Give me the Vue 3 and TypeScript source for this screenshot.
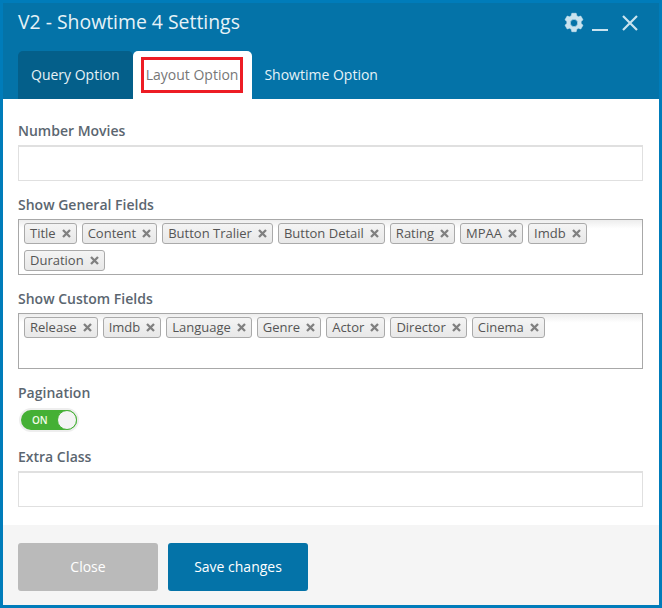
<script setup lang="ts">
const general: string[] = ['Title', 'Content', 'Button Tralier', 'Button Detail', 'Rating', 'MPAA', 'Imdb', 'Duration']
const custom: string[] = ['Release', 'Imdb', 'Language', 'Genre', 'Actor', 'Director', 'Cinema']
</script>

<template>
  <div class="frame">
    <header class="head">
      <div class="title-row">
        <h1 class="title">V2 - Showtime 4 Settings</h1>
        <div class="controls">
          <svg class="gear" width="22" height="22" viewBox="0 0 22 22" aria-hidden="true">
            <path fill-rule="evenodd" fill="#c9e3ef" stroke="#c9e3ef" stroke-width="0.6" stroke-linejoin="round" d="M8.800 1.300h4.400l.5 2.500a7.600 7.600 0 0 1 1.700 1l2.400-.8 2.200 3.800-1.900 1.700a7.600 7.600 0 0 1 0 2l1.900 1.700-2.200 3.800-2.400-.8a7.600 7.600 0 0 1-1.700 1l-.5 2.500H8.800l-.5-2.500a7.600 7.600 0 0 1-1.700-1l-2.400.8-2.200-3.800 1.900-1.700a7.600 7.600 0 0 1 0-2L2 7.800l2.200-3.800 2.400.8a7.600 7.600 0 0 1 1.700-1zM11 7.300a3.700 3.700 0 1 0 0 7.400 3.700 3.700 0 0 0 0-7.400z" />
          </svg>
          <span class="minimize"></span>
          <svg width="16" height="16" viewBox="0 0 16 16" aria-hidden="true">
            <path d="M1 1l14 14M15 1L1 15" stroke="#c9e3ef" stroke-width="2.2" fill="none" />
          </svg>
        </div>
      </div>
      <nav class="tabs">
        <a class="tab tab-dark">Query Option</a>
        <a class="tab tab-active">Layout Option<span class="mark"></span></a>
        <a class="tab tab-plain">Showtime Option</a>
      </nav>
    </header>

    <main class="body">
      <label class="label">Number Movies</label>
      <div class="input"></div>

      <label class="label">Show General Fields</label>
      <div class="tagbox">
        <span v-for="t in general" :key="t" class="tag">{{ t }}<svg class="x" width="9" height="9" viewBox="0 0 9 9" aria-hidden="true"><path d="M1 1l7 7M8 1L1 8" stroke="#808080" stroke-width="2.300" fill="none" /></svg></span>
      </div>

      <label class="label">Show Custom Fields</label>
      <div class="tagbox">
        <span v-for="t in custom" :key="t" class="tag">{{ t }}<svg class="x" width="9" height="9" viewBox="0 0 9 9" aria-hidden="true"><path d="M1 1l7 7M8 1L1 8" stroke="#808080" stroke-width="2.300" fill="none" /></svg></span>
      </div>

      <label class="label">Pagination</label>
      <div class="switch-wrap">
        <div class="switch"><span class="on">ON</span><span class="knob"></span></div>
      </div>

      <label class="label">Extra Class</label>
      <div class="input"></div>
    </main>

    <footer class="foot">
      <button class="btn btn-close">Close</button>
      <button class="btn btn-save">Save changes</button>
    </footer>
  </div>
</template>

<style>
html, body { margin: 0; background: #fff; }
</style>

<style scoped>
.frame {
  width: 662px;
  height: 608px;
  box-sizing: border-box;
  border: 3px solid #007cba;
  display: flex;
  flex-direction: column;
  font-family: "Open Sans", sans-serif;
  font-size: 14px;
  color: #555d66;
}
.head {
  height: 96px;
  background: #0473a8;
  display: flex;
  flex-direction: column;
  justify-content: space-between;
}
.title-row {
  display: flex;
  justify-content: space-between;
  align-items: center;
  height: 40px;
  padding: 0 21px 0 15px;
}
.title {
  margin: -2px 0 0;
  font-size: 19.4px;
  font-weight: 400;
  line-height: 40px;
  color: #e6f2f7;
}
.controls { display: flex; align-items: center; }
.gear { margin-right: 7px; }
.minimize {
  width: 16px;
  height: 2px;
  background: #c9e3ef;
  margin: 13px 14px 0 0;
}
.tabs {
  display: flex;
  padding-left: 15px;
  height: 48px;
}
.tab {
  position: relative;
  display: flex;
  align-items: center;
  padding: 0 13px 2px;
  font-weight: 500;
  color: #e6f2f7;
  border-radius: 5px 5px 0 0;
}
.tab-dark { background: #045f8a; }
.tab-active {
  background: #fff;
  color: #777;
  font-weight: 400;
  padding-right: 14px;
}
.tab-plain { padding-left: 12px; }
.mark {
  position: absolute;
  left: 8px;
  right: 9px;
  top: 6px;
  bottom: 6px;
  border: 3px solid #ed1c24;
}
.body {
  flex: 1;
  padding: 22px 16px 0 15px;
  background: #fff;
}
.label {
  display: block;
  font-weight: 600;
  line-height: 20px;
  margin-bottom: 4px;
  color: #5b6670;
}
.input {
  height: 36px;
  box-sizing: border-box;
  border: 1px solid #e0e0e0;
  border-top-width: 2px;
  margin-bottom: 14px;
}
.tagbox {
  height: 56px;
  box-sizing: border-box;
  border: 1px solid #a8a8a8;
  background: linear-gradient(#eeeeee 1%, #ffffff 16%);
  padding: 3px 5px;
  margin-bottom: 14px;
  display: flex;
  flex-wrap: wrap;
  align-content: flex-start;
  gap: 6px 5px;
}
.tag {
  display: inline-flex;
  align-items: center;
  height: 21px;
  box-sizing: border-box;
  padding: 0 5px 2px;
  border: 1px solid #aaa;
  border-radius: 3px;
  background: linear-gradient(#f4f4f4, #e8e8e8);
  font-size: 13px;
  color: #555;
}
.x {
  margin: 2px 0 0 6px;
}
.switch-wrap { margin-bottom: 14px; height: 26px; display: flex; align-items: center; }
.switch {
  position: relative;
  width: 56px;
  height: 20px;
  border-radius: 10px;
  background: #45b035;
  box-shadow: 0 0 0 2px #eee;
  margin-left: 3px;
  display: flex;
  align-items: center;
}
.on {
  font-size: 10px;
  font-weight: 600;
  color: #f2fbe8;
  margin-left: 11px;
}
.knob {
  position: absolute;
  right: 0;
  top: 0;
  width: 20px;
  height: 20px;
  box-sizing: border-box;
  border-radius: 50%;
  background: #f4f4f4;
  border: 1px solid #45b035;
}
.foot {
  height: 80px;
  box-sizing: border-box;
  background: #f5f5f5;
  padding: 18px 15px;
  display: flex;
  gap: 10px;
}
.btn {
  width: 140px;
  height: 48px;
  border: 0;
  border-radius: 3px;
  font-family: inherit;
  font-size: 14px;
  font-weight: 500;
  color: #fff;
  padding: 0 0 2px;
}
.btn-close { background: #bababa; }
.btn-save { background: #0473a8; }
</style>
